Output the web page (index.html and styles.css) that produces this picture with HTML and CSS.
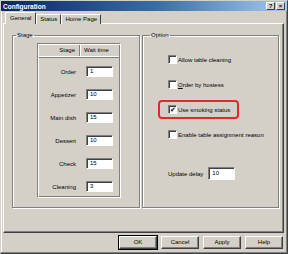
FILE: index.html
```html
<!doctype html>
<html>
<head>
<meta charset="utf-8">
<title>Configuration</title>
<link rel="stylesheet" href="styles.css">
</head>
<body>
<div class="dialog">
	<div class="titlebar">
		<span class="title">Configuration</span>
		<span class="cap-btns"><span class="cap-btn">?</span><span class="cap-btn">&times;</span></span>
	</div>
	<div class="tabs">
		<span class="tab active">General</span>
		<span class="tab">Status</span>
		<span class="tab">Home Page</span>
	</div>
	<div class="panel">
		<fieldset class="group stage">
			<legend>Stage</legend>
			<div class="stage-list">
				<div class="list-head"><span class="col-stage">Stage</span><span class="col-wait">Wait time</span></div>
				<div class="stage-row"><span class="stage-name">Order</span><span class="field">1</span></div>
				<div class="stage-row"><span class="stage-name">Appetizer</span><span class="field">10</span></div>
				<div class="stage-row"><span class="stage-name">Main dish</span><span class="field">15</span></div>
				<div class="stage-row"><span class="stage-name">Dessert</span><span class="field">10</span></div>
				<div class="stage-row"><span class="stage-name">Check</span><span class="field">15</span></div>
				<div class="stage-row"><span class="stage-name">Cleaning</span><span class="field">3</span></div>
			</div>
		</fieldset>
		<fieldset class="group option">
			<legend>Option</legend>
			<div class="option-body">
				<div class="check"><span class="box"></span><span>Allow table cleaning</span></div>
				<div class="check"><span class="box"></span><span><u>O</u>rder by hostess</span></div>
				<div class="check marked"><span class="box">&#10004;</span><span>Use smoking status</span></div>
				<div class="check"><span class="box"></span><span>Enable table assignment reason</span></div>
				<div class="delay"><span>Update delay</span><span class="field">10</span></div>
			</div>
		</fieldset>
	</div>
	<div class="buttons">
		<span class="btn default">OK</span>
		<span class="btn">Cancel</span>
		<span class="btn">Apply</span>
		<span class="btn">Help</span>
	</div>
</div>
</body>
</html>
```

FILE: styles.css
```css
*{ margin:0; padding:0; box-sizing:border-box;}
body{ width:288px; height:254px; background:#d4d0c8; font-family:"Liberation Sans", Arial, sans-serif; font-size:6px; color:#000; overflow:hidden;}

.dialog{ width:288px; height:254px; border:1px solid; border-color:#d4d0c8 #404040 #404040 #d4d0c8; box-shadow:inset -1px -1px 0 #808080, inset 1px 1px 0 #fff;}

.titlebar{ height:10px; display:flex; align-items:center; justify-content:space-between; padding:0 2px;
	background:linear-gradient(to right,#0a246a 0%,#3a6ea5 55%,#a6caf0 100%);}
.title{ color:#fff; font-weight:bold; font-size:6.5px;}
.cap-btns{ display:flex; gap:1px;}
.cap-btn{ width:9px; height:8px; background:#d4d0c8; border:1px solid; border-color:#fff #404040 #404040 #fff;
	font-size:6px; font-weight:bold; line-height:6px; text-align:center;}

.tabs{ display:flex; align-items:flex-end; height:13px; padding-left:5px; margin-bottom:-1px; position:relative; z-index:1;}
.tab{ height:10px; padding:0 3px; line-height:9px; border:1px solid; border-bottom:none; border-color:#fff #404040 #404040 #fff;
	border-radius:1px 1px 0 0; background:#d4d0c8;}
.tab.active{ height:12px; padding:0 4px; line-height:11px; margin-left:-1px;}

.panel{ display:flex; gap:2px; width:281px; height:210px; margin-left:2px; padding:7px 0 0 8px;
	border:1px solid; border-color:#fff #404040 #404040 #fff; box-shadow:inset -1px -1px 0 #808080;}

.group{ height:177px; border:1px solid #808080; box-shadow:inset 1px 1px 0 #fff, 1px 1px 0 #fff;}
.group legend{ margin-left:3px; padding:0 1px; line-height:8px;}
.stage{ width:128px; padding:4px 0 0 0;}
.option{ width:137px; padding:8px 0 0 0;}
.option legend{ margin-left:7px;}
.option-body{ padding-left:25px;}

.stage-list{ width:84px; height:155px; margin-left:24px; border:1px solid; border-color:#808080 #fff #fff #808080;
	box-shadow:inset 1px 1px 0 #fff, inset -1px -1px 0 #808080; padding:1px;}
.list-head{ display:flex; height:12px; line-height:11px; border-bottom:1px solid #fff; box-shadow:0 1px 0 #808080; margin-bottom:3px;}
.col-stage{ width:41px; text-align:right; padding-right:4px; border-right:1px solid #808080; box-shadow:1px 0 0 #fff;}
.col-wait{ padding-left:4px;}

.stage-row{ display:flex; align-items:center; height:23px;}
.stage-name{ width:37px; text-align:right;}
.field{ display:block; width:27px; height:11px; margin-left:10px; padding-left:3px; line-height:9px; background:#fff;
	border:1px solid; border-color:#808080 #fff #fff #808080; box-shadow:inset 1px 1px 0 #404040;}

.check{ display:flex; align-items:center; gap:1px; height:25px; width:max-content;}
.box{ width:9px; height:9px; background:#fff; border:1px solid; border-color:#808080 #fff #fff #808080;
	box-shadow:inset 1px 1px 0 #404040; font-size:7px; line-height:7px; text-align:center;}
.marked{ position:relative;}
.marked::after{ content:""; position:absolute; top:3px; bottom:3px; left:-10px; right:-9px; border:2px solid #e02a2a; border-radius:4px;}

.delay{ display:flex; align-items:center; margin-top:20px;}
.delay .field{ margin-left:5px; width:27px; height:13px; line-height:11px;}

.buttons{ display:flex; justify-content:flex-end; gap:4px; padding:3px 4px 0 0;}
.btn{ width:38px; height:13px; line-height:11px; text-align:center; border:1px solid; border-color:#fff #404040 #404040 #fff;
	box-shadow:inset -1px -1px 0 #808080;}
.btn.default{ outline:1px solid #000;}
```
